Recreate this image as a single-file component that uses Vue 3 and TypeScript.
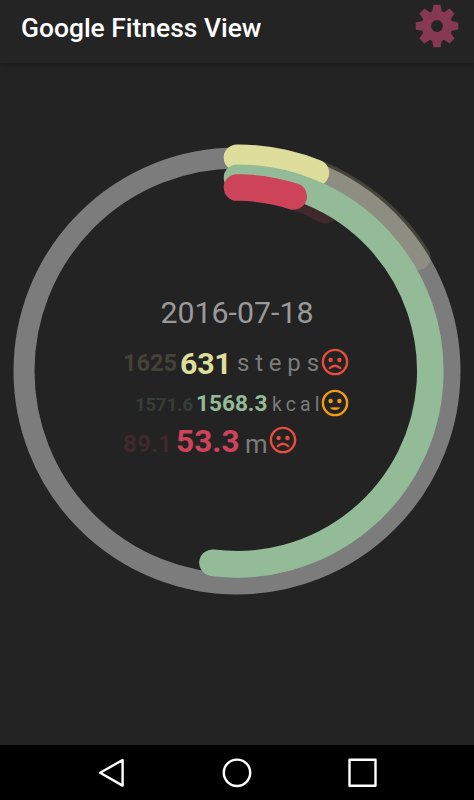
<script setup lang="ts">
interface Arc {
  name: string
  radius: number
  sweep: number
}

interface Metric {
  name: string
  average: string
  current: string
  unit: string
  mood: 'sad' | 'neutral'
}

const title = 'Google Fitness View'
const date = '2016-07-18'

const averages: Arc[] = [
  { name: 'steps', radius: 213.3, sweep: 57.7 },
  { name: 'distance', radius: 183.5, sweep: 28.7 },
]

const totals: Arc[] = [
  { name: 'steps', radius: 213.3, sweep: 21.7 },
  { name: 'energy', radius: 193.3, sweep: 187.3 },
  { name: 'distance', radius: 183.5, sweep: 18 },
]

const metrics: Metric[] = [
  { name: 'steps', average: '1625', current: '631', unit: 'steps', mood: 'sad' },
  { name: 'energy', average: '1571.6', current: '1568.3', unit: 'kcal', mood: 'neutral' },
  { name: 'distance', average: '89.1', current: '53.3', unit: 'm', mood: 'sad' },
]

const teeth = [0, 45, 90, 135, 180, 225, 270, 315]

function arcPath({ radius, sweep }: Arc): string {
  const a = (sweep * Math.PI) / 180
  const x = (radius * Math.sin(a)).toFixed(2)
  const y = (-radius * Math.cos(a)).toFixed(2)
  return `M0 ${-radius}A${radius} ${radius} 0 ${sweep > 180 ? 1 : 0} 1 ${x} ${y}`
}
</script>

<template>
  <div class="screen">
    <header class="bar">
      <h1 class="title">{{ title }}</h1>
      <svg class="gear" viewBox="-22 -22 44 44" aria-label="Settings">
        <path
          v-for="t in teeth"
          :key="t"
          d="M-5.2 -13L-3.5 -21.3H3.5L5.2 -13Z"
          :transform="`rotate(${t})`"
        />
        <circle class="gear-body" r="10.7" />
      </svg>
    </header>

    <main class="content">
      <svg class="dial" viewBox="-237 -237 474 474">
        <circle class="track" r="213" />
        <path
          v-for="arc in averages"
          :key="'avg-' + arc.name"
          class="arc faded"
          :class="arc.name"
          :d="arcPath(arc)"
        />
        <path
          v-for="arc in totals"
          :key="arc.name"
          class="arc"
          :class="arc.name"
          :d="arcPath(arc)"
        />
      </svg>

      <section class="summary">
        <div class="date">{{ date }}</div>
        <div v-for="m in metrics" :key="m.name" class="metric" :class="m.name">
          <span class="average">{{ m.average }}</span>
          <span class="current">{{ m.current }}</span>
          <span class="unit">{{ m.unit }}</span>
          <svg class="face" :class="m.mood" viewBox="-14 -14 28 28">
            <circle class="line" r="12.1" />
            <circle class="eye" cx="-4.4" cy="-2" r="2.2" />
            <circle class="eye" cx="4.4" cy="-2" r="2.2" />
            <path v-if="m.mood === 'sad'" class="line" d="M-5.2 6.1Q0 1.6 5.2 6.1" />
            <path v-else class="eye" d="M-5.2 4.6Q0 4 5.2 4.6Q4 6.9 0 6.9Q-4 6.9 -5.2 4.6Z" />
          </svg>
        </div>
      </section>
    </main>

    <nav class="nav">
      <svg viewBox="0 0 30 30"><path d="M4.2 14.8L26.6 2V27.6Z" /></svg>
      <svg viewBox="0 0 30 30"><circle cx="15" cy="14.8" r="13.2" /></svg>
      <svg viewBox="0 0 30 30"><rect x="1.5" y="1.8" width="26" height="26" /></svg>
    </nav>
  </div>
</template>

<style>
body {
  background: #232323;
}
</style>

<style scoped>
.screen {
  display: flex;
  flex-direction: column;
  width: 474px;
  height: 800px;
  overflow: hidden;
  background: #232323;
  font-family: Roboto, 'Liberation Sans', sans-serif;
}

.bar {
  display: flex;
  justify-content: space-between;
  box-sizing: border-box;
  height: 63px;
  padding: 4px 15px 0 21px;
  background: #242424;
  box-shadow: 0 1px 8px rgba(0, 0, 0, 0.28);
}

.title {
  margin: 0;
  padding-top: 9px;
  color: #fff;
  font-size: 26.4px;
  line-height: 31px;
  font-weight: 500;
}

.gear {
  width: 44px;
  height: 44px;
  fill: #873852;
}

.gear-body {
  fill: none;
  stroke: #873852;
  stroke-width: 9.6;
}

.content {
  display: grid;
  flex: 1;
  grid-template-columns: 474px;
  align-content: start;
  padding-top: 71px;
}

.dial,
.summary {
  grid-area: 1 / 1;
}

.dial {
  width: 474px;
  height: 474px;
}

.track {
  fill: none;
  stroke: #7c7c7c;
  stroke-width: 21;
}

.arc {
  fill: none;
  stroke-width: 26.6;
  stroke-linecap: round;
}

.arc.steps {
  stroke: #dedd9c;
}

.arc.energy {
  stroke: #93bb97;
}

.arc.distance {
  stroke: #cd4359;
}

.faded {
  opacity: 0.18;
}

.summary {
  display: flex;
  flex-direction: column;
  padding-top: 161px;
}

.date {
  height: 47px;
  color: #9a9a9a;
  font-size: 30.3px;
  line-height: 36px;
  text-align: center;
}

.metric {
  display: grid;
  grid-template-columns: 57px 56px 85px 28px;
  height: 40px;
  padding-left: 123px;
  white-space: nowrap;
  line-height: 40px;
}

.average,
.current {
  font-weight: 700;
}

.average {
  opacity: 0.17;
}

.unit {
  color: #7c7c7c;
}

.face {
  width: 28px;
  height: 28px;
  margin-top: 6px;
}

.metric.steps {
  color: #dedd9c;
}

.steps .average {
  padding-top: 1px;
  font-size: 23.6px;
}

.steps .current {
  padding-top: 2px;
  font-size: 30.4px;
  letter-spacing: -0.3px;
}

.steps .unit {
  padding: 1px 0 0 1px;
  font-size: 24px;
  letter-spacing: 5.8px;
}

.metric.energy {
  grid-template-columns: 61px 75px 50px 28px;
  padding-left: 135px;
  color: #93bb97;
}

.energy .average {
  padding-top: 3px;
  font-size: 18.4px;
}

.energy .current {
  padding-top: 2px;
  font-size: 22.6px;
}

.energy .unit {
  padding: 3px 0 0 1px;
  font-size: 19.4px;
  letter-spacing: 4.1px;
}

.energy .face {
  margin-top: 7px;
}

.metric.distance {
  grid-template-columns: 53px 70px 23px 28px;
  color: #cd4359;
}

.distance .average {
  padding-top: 2px;
  font-size: 24.4px;
}

.distance .current {
  font-size: 31.6px;
}

.distance .unit {
  padding-top: 2px;
  margin-left: -1px;
  font-size: 25.8px;
}

.distance .face {
  margin-top: 4px;
}

.line {
  fill: none;
  stroke-width: 2.4;
  stroke-linecap: round;
}

.sad .line {
  stroke: #e74c3c;
}

.sad .eye {
  fill: #e74c3c;
}

.neutral .line {
  stroke: #f39c12;
}

.neutral .eye {
  fill: #f39c12;
}

.nav {
  display: flex;
  gap: 96px;
  justify-content: center;
  align-items: center;
  height: 55px;
  background: #000;
}

.nav svg {
  width: 30px;
  height: 30px;
  fill: none;
  stroke: #fff;
  stroke-width: 2.4;
  stroke-linejoin: round;
}
</style>
